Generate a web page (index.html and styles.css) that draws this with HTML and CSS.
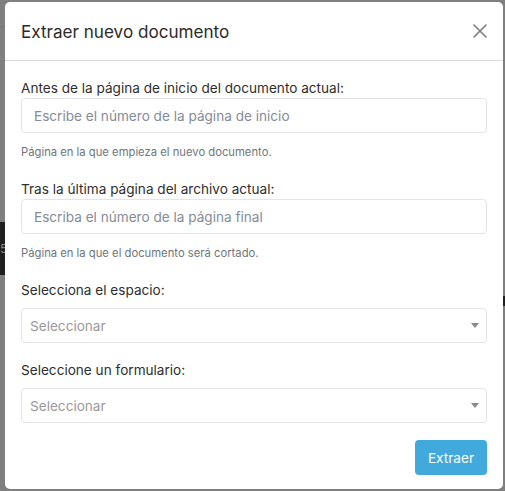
FILE: index.html
```html
<!DOCTYPE html>
<html lang="es">
<head>
<meta charset="utf-8">
<title>Extraer nuevo documento</title>
<link rel="stylesheet" href="styles.css">
</head>
<body>
<div class="backdrop">
  <span class="bg-left">5</span>
</div>
<div class="modal">
  <div class="modal-header">
    <h2 class="modal-title">Extraer nuevo documento</h2>
    <button class="close" type="button" aria-label="Cerrar">
      <svg width="14" height="14" viewBox="0 0 14 14"><path d="M1 1L13 13M13 1L1 13" stroke="#7d7d7d" stroke-width="1.6" fill="none" stroke-linecap="round"/></svg>
    </button>
  </div>
  <div class="modal-body">
    <div class="group">
      <label class="label">Antes de la página de inicio del documento actual:</label>
      <input class="input" type="text" placeholder="Escribe el número de la página de inicio">
      <p class="help">Página en la que empieza el nuevo documento.</p>
    </div>
    <div class="group">
      <label class="label">Tras la última página del archivo actual:</label>
      <input class="input" type="text" placeholder="Escriba el número de la página final">
      <p class="help">Página en la que el documento será cortado.</p>
    </div>
    <div class="group sel-group">
      <label class="label">Selecciona el espacio:</label>
      <div class="select"><span>Seleccionar</span><i class="caret"></i></div>
    </div>
    <div class="group sel-group">
      <label class="label">Seleccione un formulario:</label>
      <div class="select"><span>Seleccionar</span><i class="caret"></i></div>
    </div>
    <div class="actions">
      <button class="btn" type="button">Extraer</button>
    </div>
  </div>
</div>
</body>
</html>
```

FILE: styles.css
```css
* { box-sizing: border-box; }
html, body { margin: 0; padding: 0; }
body {
  width: 505px;
  height: 491px;
  overflow: hidden;
  background: #7f7f7f;
  font-family: Inter, "Noto Sans", sans-serif;
  padding: 2px 2px 0 5px;
  position: relative;
}
.backdrop {
  position: absolute;
  inset: 0;
  background:
    linear-gradient(#1f1f1f, #1f1f1f) 0 222px / 5px 53px no-repeat,
    linear-gradient(#1f1f1f, #1f1f1f) 503px 296px / 2px 10px no-repeat,
    linear-gradient(#777, #777) 0 26px / 5px 1px no-repeat,
    #7f7f7f;
}
.bg-left {
  position: absolute;
  left: 0;
  top: 242px;
  font-size: 12px;
  line-height: 14px;
  color: #888;
}
.modal {
  position: relative;
  width: 498px;
  height: 487px;
  background: #fff;
  border-radius: 5px;
  display: flex;
  flex-direction: column;
}
.modal-header {
  height: 59px;
  border-bottom: 1px solid #d7dbe0;
  display: flex;
  align-items: center;
  justify-content: space-between;
  padding: 0 16px 0 16px;
}
.modal-title {
  margin: 0;
  font-size: 17.1px;
  font-weight: 400;
  color: #2b2b2b;
  line-height: 24px;
  padding-top: 1px;
}
.close {
  border: 0;
  background: none;
  padding: 0;
  width: 14px;
  height: 14px;
  display: flex;
  margin-right: 0;
}
.modal-body {
  padding: 17px 16px 0 16px;
  display: flex;
  flex-direction: column;
}
.group {
  display: flex;
  flex-direction: column;
}
.label {
  font-size: 13.6px;
  line-height: 20px;
  color: #2e2e2e;
}
.sel-group .label { margin-bottom: 8px; }
.sel-group { margin-bottom: 17px; }
.input {
  height: 35px;
  border: 1px solid #e1e5ea;
  border-radius: 4px;
  padding: 0 12px;
  font-family: inherit;
  font-size: 13.6px;
  color: #333;
  outline: none;
}
.input::placeholder { color: #838c98; }
.help {
  margin: 10px 0 18px;
  font-size: 11.25px;
  line-height: 18px;
  color: #6f757c;
}
.select {
  height: 35px;
  border: 1px solid #e1e5ea;
  border-radius: 4px;
  padding: 0 8px;
  display: flex;
  align-items: center;
  justify-content: space-between;
  font-size: 13.6px;
  color: #9a9a9a;
}
.caret {
  width: 0;
  height: 0;
  border-left: 4px solid transparent;
  border-right: 4px solid transparent;
  border-top: 5px solid #8a8a8a;
  margin-right: -1px;
}
.actions {
  display: flex;
  justify-content: flex-end;
  margin-top: 0;
}
.btn {
  width: 72px;
  height: 35px;
  border: 0;
  border-radius: 4px;
  background: #42a9dc;
  color: #fff;
  font-family: inherit;
  font-size: 13.6px;
}
```
